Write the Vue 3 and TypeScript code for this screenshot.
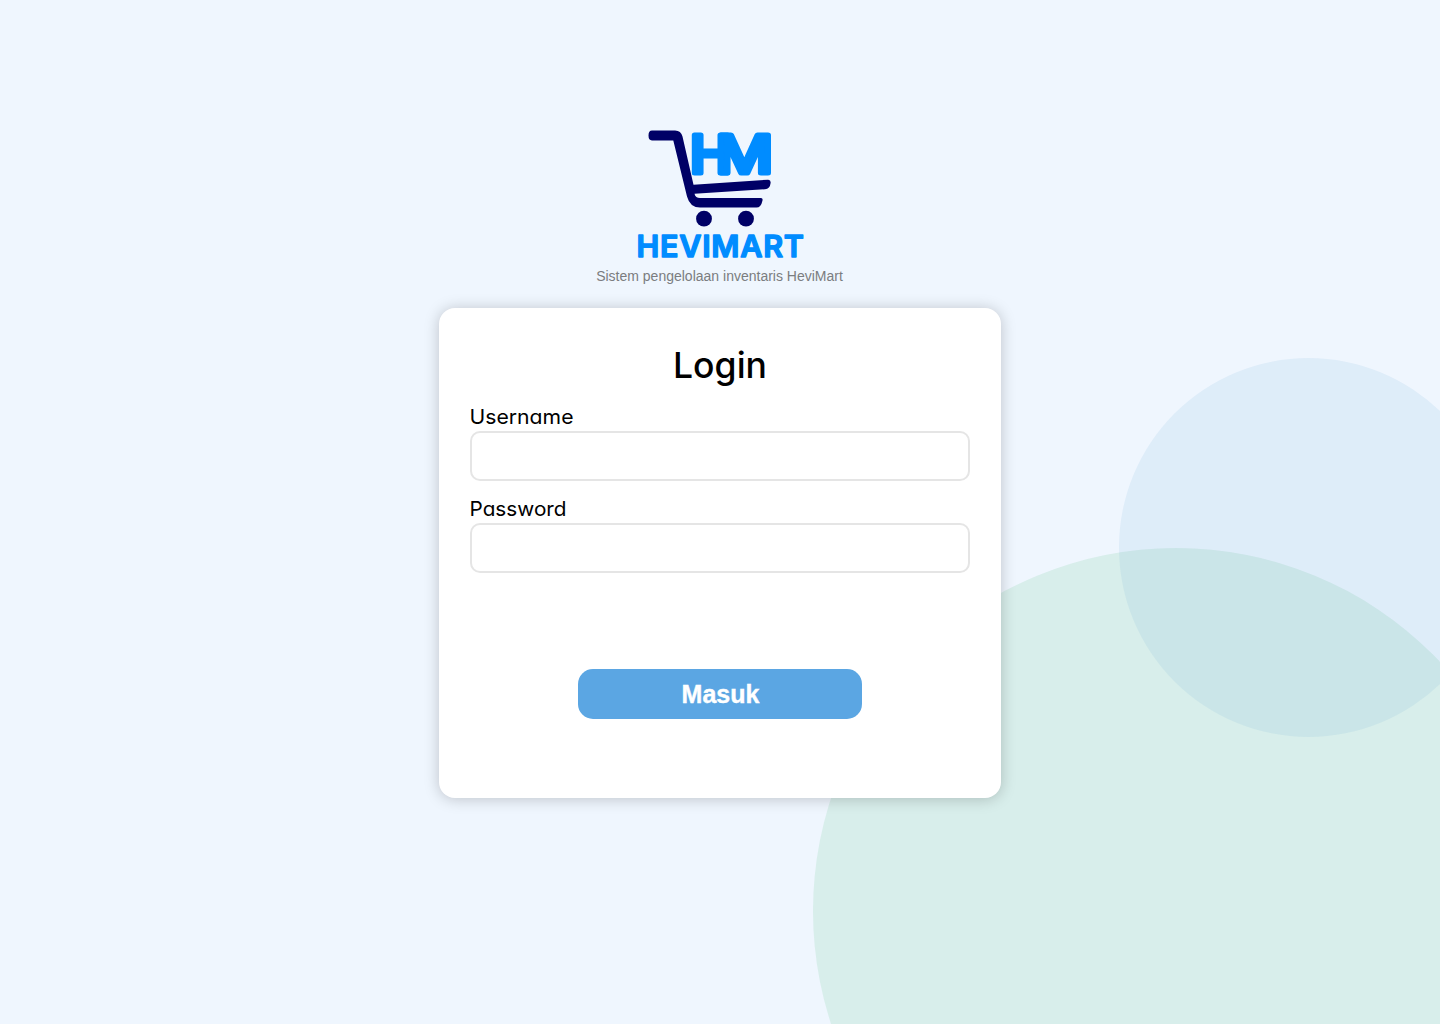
<script setup lang="ts">
import { ref } from 'vue'

interface Field {
  id: string
  label: string
  type: string
  width: number
}

const fields: Field[] = [
  { id: 'username', label: 'Username', type: 'text', width: 103 },
  { id: 'password', label: 'Password', type: 'password', width: 96 },
]

const values = ref<Record<string, string>>({ username: '', password: '' })
</script>

<template>
  <main class="page">
    <svg class="backdrop" viewBox="0 0 1440 1024" aria-hidden="true">
      <circle cx="1176" cy="911" r="363" fill="#3cb870" fill-opacity="0.13" />
      <circle cx="1308.5" cy="547.5" r="189.5" fill="#5ba6d0" fill-opacity="0.11" />
    </svg>

    <header class="brand">
      <svg class="logo" width="180" height="140" viewBox="630 125 180 140" role="img">
        <path
          d="M652 130.500H675Q681 130.500 682.500 136.500L693.500 184.800L768 179.700Q771 179.500 770.600 183Q770 188.800 765 189.300L694.500 193.700Q695.500 198 700 198H761Q763 198 762.500 200.500Q761 207.600 756.500 207.600H700Q690 207.600 687 196.500L673.300 140.400H652Q648.500 140.400 648.500 135.500Q648.500 130.500 652 130.500Z"
          fill="#000066"
        />
        <circle cx="704" cy="218.700" r="7.900" fill="#000066" />
        <circle cx="746" cy="218.700" r="7.900" fill="#000066" />
        <g class="mark">
          <text x="690" y="172.600" textLength="42" lengthAdjust="spacingAndGlyphs">H</text>
          <text x="715.500" y="172.600" textLength="57.500" lengthAdjust="spacingAndGlyphs">M</text>
        </g>
        <text class="wordmark" x="636.500" y="257.300" textLength="167.500" lengthAdjust="spacing">HEVIMART</text>
      </svg>
      <p class="tagline">Sistem pengelolaan inventaris HeviMart</p>
    </header>

    <form class="card" @submit.prevent>
      <h1 class="title">
        <svg width="100" height="54" viewBox="0 0 100 54">
          <text x="3" y="38" textLength="94" lengthAdjust="spacingAndGlyphs">Login</text>
        </svg>
      </h1>
      <div v-for="field in fields" :key="field.id" class="field">
        <label :for="field.id">
          <svg width="140" height="30" viewBox="0 0 140 30">
            <text x="-0.500" y="22" :textLength="field.width + 1" lengthAdjust="spacingAndGlyphs">{{ field.label }}</text>
          </svg>
        </label>
        <input :id="field.id" v-model="values[field.id]" :type="field.type" />
      </div>
      <button class="submit" type="submit">Masuk</button>
    </form>
  </main>
</template>

<style>
body {
  margin: 0;
}
</style>

<style scoped>
.page {
  position: relative;
  display: flex;
  flex-direction: column;
  align-items: center;
  box-sizing: border-box;
  width: 100%;
  height: 1024px;
  padding-top: 125px;
  overflow: hidden;
  background: #eff6fe;
  font-family: Inter, "Liberation Sans", sans-serif;
}

.backdrop {
  position: absolute;
  top: 0;
  left: 0;
  width: 1440px;
  height: 1024px;
}

.brand {
  position: relative;
  display: flex;
  flex-direction: column;
  align-items: center;
  height: 183px;
}

.logo {
  display: block;
  overflow: visible;
}

.mark {
  fill: #008cff;
  stroke: #008cff;
  stroke-width: 5px;
  stroke-linejoin: round;
  font-family: Inter, sans-serif;
  font-size: 51.500px;
  font-weight: 500;
}

.wordmark {
  fill: #008cff;
  stroke: #008cff;
  stroke-width: 1.4px;
  stroke-linejoin: round;
  font-family: Inter, sans-serif;
  font-size: 30.500px;
  font-weight: 600;
}

.tagline {
  margin: 3px 1px 0 0;
  color: #7b7d80;
  font: 14px/16px "Liberation Sans", Arial, sans-serif;
}

.card {
  position: relative;
  display: flex;
  flex-direction: column;
  align-items: center;
  box-sizing: border-box;
  width: 562px;
  height: 490px;
  padding: 32px 31px 0;
  border-radius: 16px;
  background: #fff;
  box-shadow: 0 1px 15px rgba(0, 0, 0, 0.21);
}

.title {
  height: 62px;
  margin: 0;
  font-size: 35.500px;
  font-weight: 500;
  font-feature-settings: "cv11";
}

.title svg,
.field svg {
  display: block;
  overflow: visible;
}

.field {
  width: 100%;
  height: 92px;
  font-size: 20.300px;
  font-feature-settings: "cv11";
}

.field label {
  display: block;
  height: 29px;
}

.field input {
  display: block;
  box-sizing: border-box;
  width: 500px;
  height: 50px;
  padding: 0 14px;
  border: 2px solid #e5e5e5;
  border-radius: 10px;
  outline: none;
  background: #fff;
  font: inherit;
}

.submit {
  width: 284px;
  height: 50px;
  margin-top: 83px;
  padding: 0 0 0 1px;
  border: 0;
  border-radius: 15px;
  background: #5ba6e3;
  color: #fff;
  font: bold 25px/50px "Liberation Sans", Arial, sans-serif;
  -webkit-text-stroke: 0.4px #fff;
}
</style>
